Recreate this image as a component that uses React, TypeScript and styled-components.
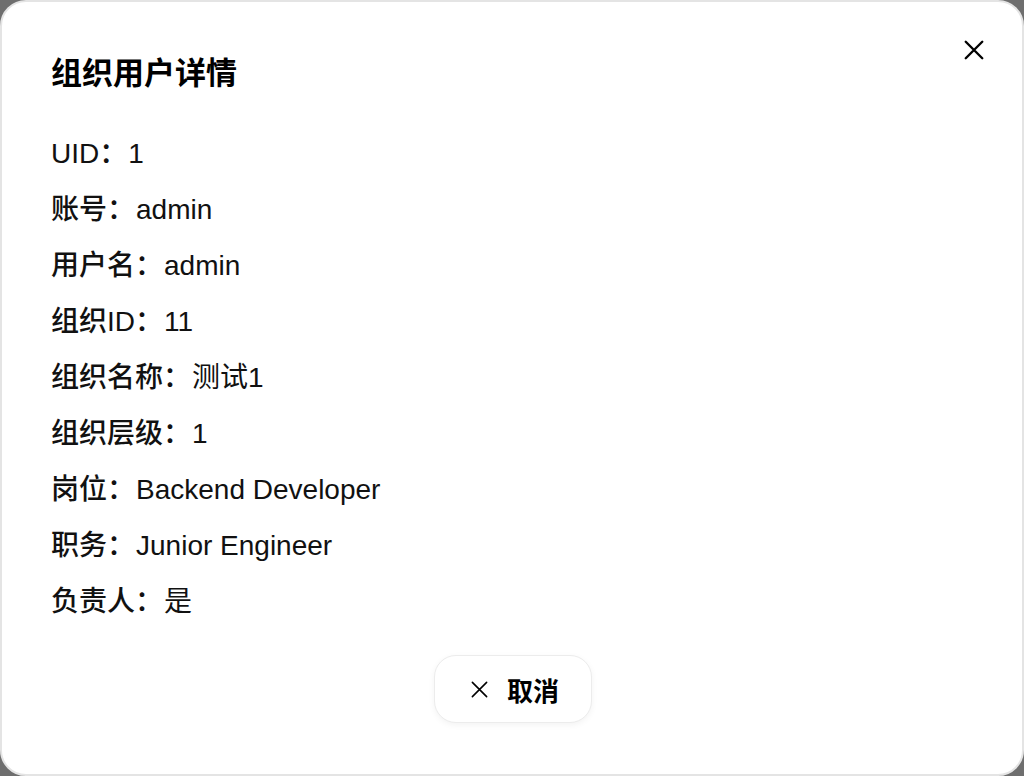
import styled, { createGlobalStyle } from "styled-components";

const GlobalStyle = createGlobalStyle`
  html, body {
    margin: 0;
    padding: 0;
    background: #6e6e6e;
  }
  body {
    font-family: "Liberation Sans", "Noto Sans CJK SC", sans-serif;
    -webkit-font-smoothing: antialiased;
  }
`;

const Modal = styled.div`
  position: relative;
  box-sizing: border-box;
  width: 1024px;
  height: 776px;
  background: #fff;
  border: 2px solid #e4e4e4;
  border-radius: 26px;
  padding: 52px 48px 0 49px;
  display: flex;
  flex-direction: column;
`;

const Title = styled.h2`
  margin: 0 0 32px;
  font-size: 31px;
  line-height: 40px;
  font-weight: 700;
  color: #000;
`;

const CloseButton = styled.button`
  position: absolute;
  top: 26px;
  right: 26px;
  width: 44px;
  height: 44px;
  padding: 0;
  border: none;
  background: transparent;
  display: flex;
  align-items: center;
  justify-content: center;
  cursor: pointer;
  color: #000;
`;

const InfoList = styled.dl`
  margin: 0;
  display: flex;
  flex-direction: column;
`;

const InfoRow = styled.div`
  display: flex;
  align-items: baseline;
  font-size: 28px;
  line-height: 56px;
  color: #111;
`;

const Label = styled.dt`
  font-weight: 500;
`;

const Value = styled.dd`
  margin: 0 0 0 1px;
  font-weight: 400;
`;

const Footer = styled.div`
  display: flex;
  justify-content: center;
  margin-top: 25px;
`;

const CancelButton = styled.button`
  box-sizing: border-box;
  width: 158px;
  height: 68px;
  display: flex;
  align-items: center;
  justify-content: center;
  gap: 18px;
  padding: 0 0 0 4px;
  border: 1px solid #ececec;
  border-radius: 22px;
  background: #fff;
  box-shadow: 0 2px 6px rgba(0, 0, 0, 0.05);
  font-family: inherit;
  font-size: 26px;
  font-weight: 700;
  color: #000;
  cursor: pointer;
`;

const XIcon = ({ size, stroke }: { size: number; stroke: number }) => (
  <svg width={size} height={size} viewBox="0 0 24 24" fill="none">
    <path
      d="M3 3L21 21M21 3L3 21"
      stroke="currentColor"
      strokeWidth={stroke}
      strokeLinecap="round"
    />
  </svg>
);

const rows: [string, string][] = [
  ["UID", "1"],
  ["账号", "admin"],
  ["用户名", "admin"],
  ["组织ID", "11"],
  ["组织名称", "测试1"],
  ["组织层级", "1"],
  ["岗位", "Backend Developer"],
  ["职务", "Junior Engineer"],
  ["负责人", "是"],
];

export default function App() {
  return (
    <>
      <GlobalStyle />
      <Modal>
        <CloseButton aria-label="关闭">
          <XIcon size={22} stroke={2.6} />
        </CloseButton>
        <Title>组织用户详情</Title>
        <InfoList>
          {rows.map(([label, value]) => (
            <InfoRow key={label}>
              <Label>{label}：</Label>
              <Value>{value}</Value>
            </InfoRow>
          ))}
        </InfoList>
        <Footer>
          <CancelButton>
            <XIcon size={19} stroke={2} />
            取消
          </CancelButton>
        </Footer>
      </Modal>
    </>
  );
}
